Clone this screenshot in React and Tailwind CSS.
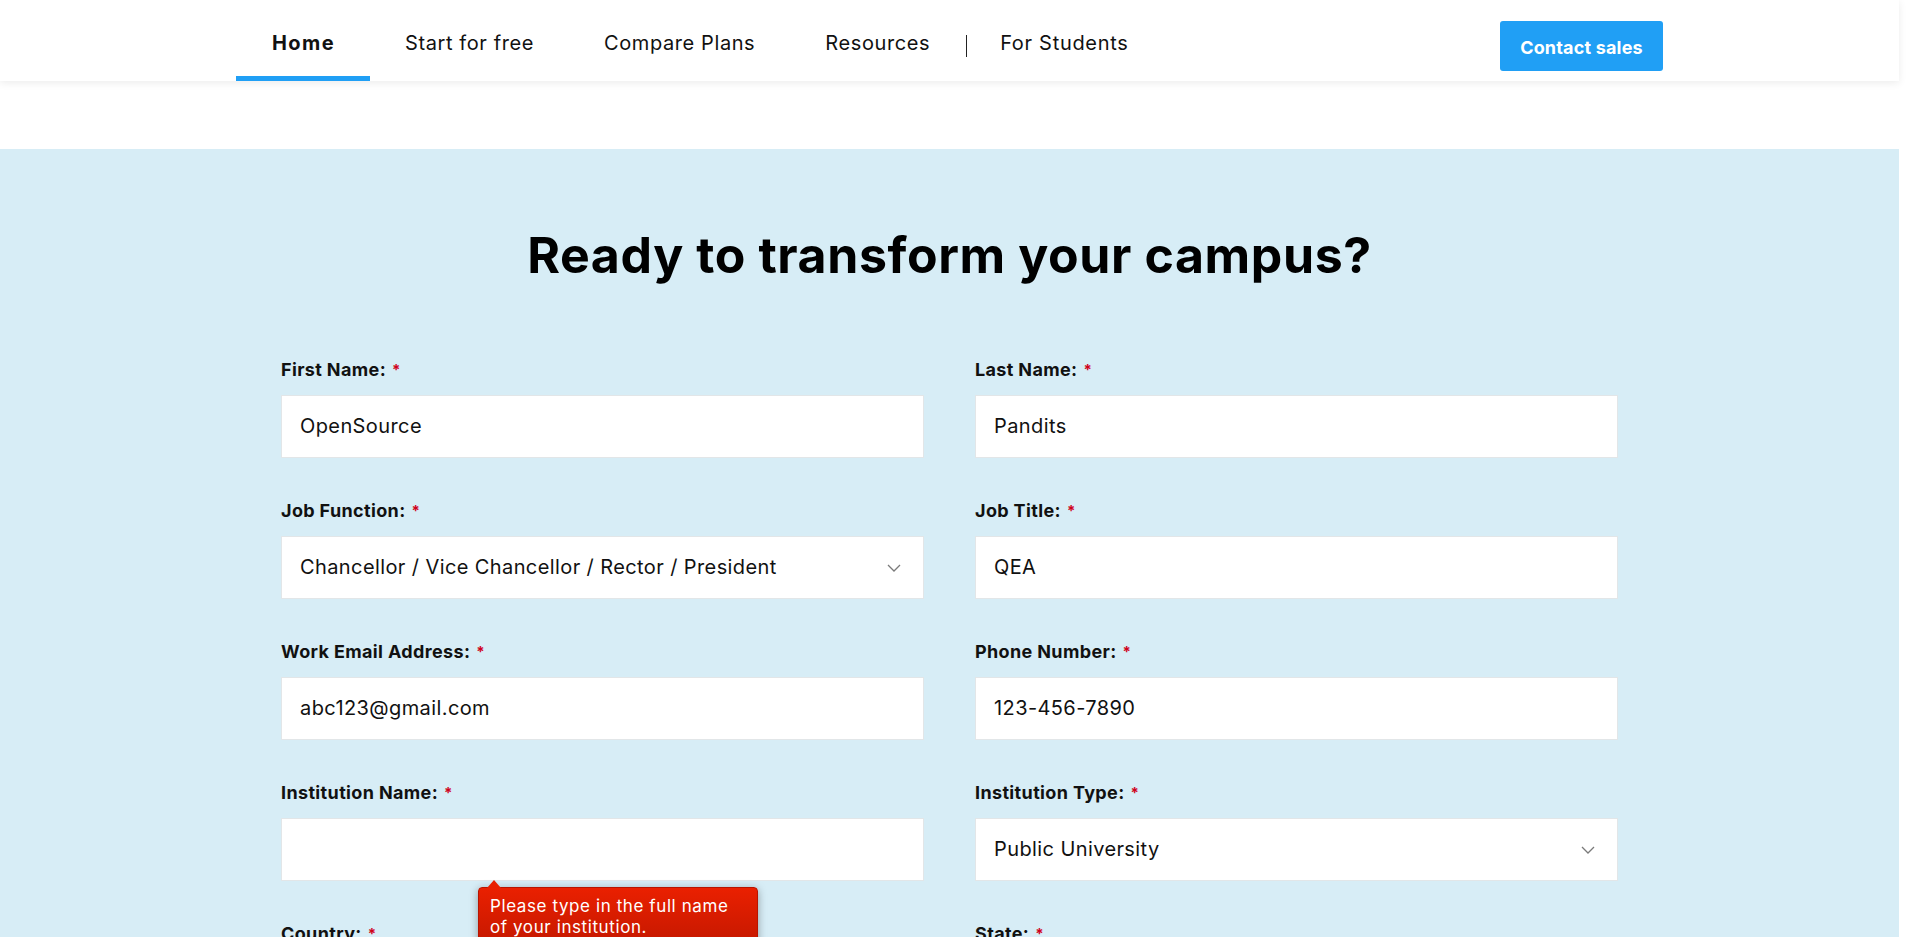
import React from "react";

function Chevron() {
  return (
    <svg width="14" height="8" viewBox="0 0 14 8" fill="none" className="absolute right-[22px] top-1/2 -translate-y-1/2">
      <path d="M1 1l6 6 6-6" stroke="#7a7a7a" strokeWidth="1.3" />
    </svg>
  );
}

function Field({ label, value, select, children }) {
  return (
    <div className="relative flex flex-col">
      <div className="h-[20px] flex items-center text-[18px] leading-[20px] font-bold text-[#111] tracking-[0.02em]">
        {label}
        <span className="ml-[6px] text-[#d0021b] text-[15px] font-bold">*</span>
      </div>
      <div className="relative mt-[15px] mb-[43px] h-[63px] bg-white border border-[#e2e6e8] flex items-center pl-[18px] pb-[1px] text-[20px] text-[#111] tracking-[0.02em]">
        {value}
        {select && <Chevron />}
      </div>
      {children}
    </div>
  );
}

export default function App() {
  const nav = ["Home", "Start for free", "Compare Plans", "Resources"];
  return (
    <div className="w-full h-[937px] overflow-hidden bg-white font-[Inter,sans-serif]">
      <div className="w-[1899px]">
        <header className="relative z-10 h-[81px] bg-white shadow-[0_2px_8px_rgba(0,0,0,0.08)] px-[236px] flex justify-between items-start">
          <nav className="flex h-full items-stretch">
            {nav.map((n, i) => (
              <div
                key={n}
                className={
                  "relative h-full px-[35px] flex items-center pt-[5px] text-[20px] text-[#111] " +
                  (i === 0 ? "font-bold tracking-[0.07em] pl-[36px]" : "font-normal tracking-[0.03em]")
                }
              >
                {n}
                {i === 0 && <div className="absolute left-0 right-0 bottom-0 h-[5px] bg-[#209ff5]" />}
              </div>
            ))}
            <div className="h-full flex items-center pt-[10px] pl-px">
              <div className="w-px h-[22px] bg-[#222]" />
            </div>
            <div className="h-full pl-[33px] pr-9 flex items-center pt-[5px] text-[20px] tracking-[0.035em] text-[#111]">
              For Students
            </div>
          </nav>
          <button className="mt-[21px] h-[50px] w-[163px] rounded-[3px] bg-[#209ff5] text-white text-[18px] font-bold tracking-[0.01em] flex items-center justify-center pt-[2px]">
            Contact sales
          </button>
        </header>
        <div className="h-[68px] bg-white" />
        <section className="bg-[#d7edf6] pt-[76px] px-[281px]">
          <h1 className="text-center text-[50px] leading-[60px] font-bold text-black tracking-[0.012em]">
            Ready to transform your campus?
          </h1>
          <div className="mt-[75px] grid grid-cols-2 gap-x-[51px]">
            <Field label="First Name:" value="OpenSource" />
            <Field label="Last Name:" value="Pandits" />
            <Field label="Job Function:" value="Chancellor / Vice Chancellor / Rector / President" select />
            <Field label="Job Title:" value="QEA" />
            <Field label="Work Email Address:" value="abc123@gmail.com" />
            <Field label="Phone Number:" value="123-456-7890" />
            <Field label="Institution Name:" value="">
              <div className="absolute left-[197px] top-[104px] z-20 w-[280px] rounded-[4px] border border-[#b81400] bg-gradient-to-b from-[#ea2000] to-[#c41800] shadow-[0_2px_8px_rgba(0,0,0,0.35)] pl-[11px] pr-[8px] pt-[8px] pb-[8px] text-white text-[17px] leading-[21px] tracking-[0.035em]">
                <div className="absolute -top-[8px] left-[8px] w-0 h-0 border-l-[7px] border-r-[7px] border-b-[8px] border-l-transparent border-r-transparent border-b-[#e82000]" />
                Please type in the full name of your institution.
              </div>
            </Field>
            <Field label="Institution Type:" value="Public University" select />
            <Field label="Country:" value="" select />
            <Field label="State:" value="" select />
          </div>
        </section>
      </div>
    </div>
  );
}
